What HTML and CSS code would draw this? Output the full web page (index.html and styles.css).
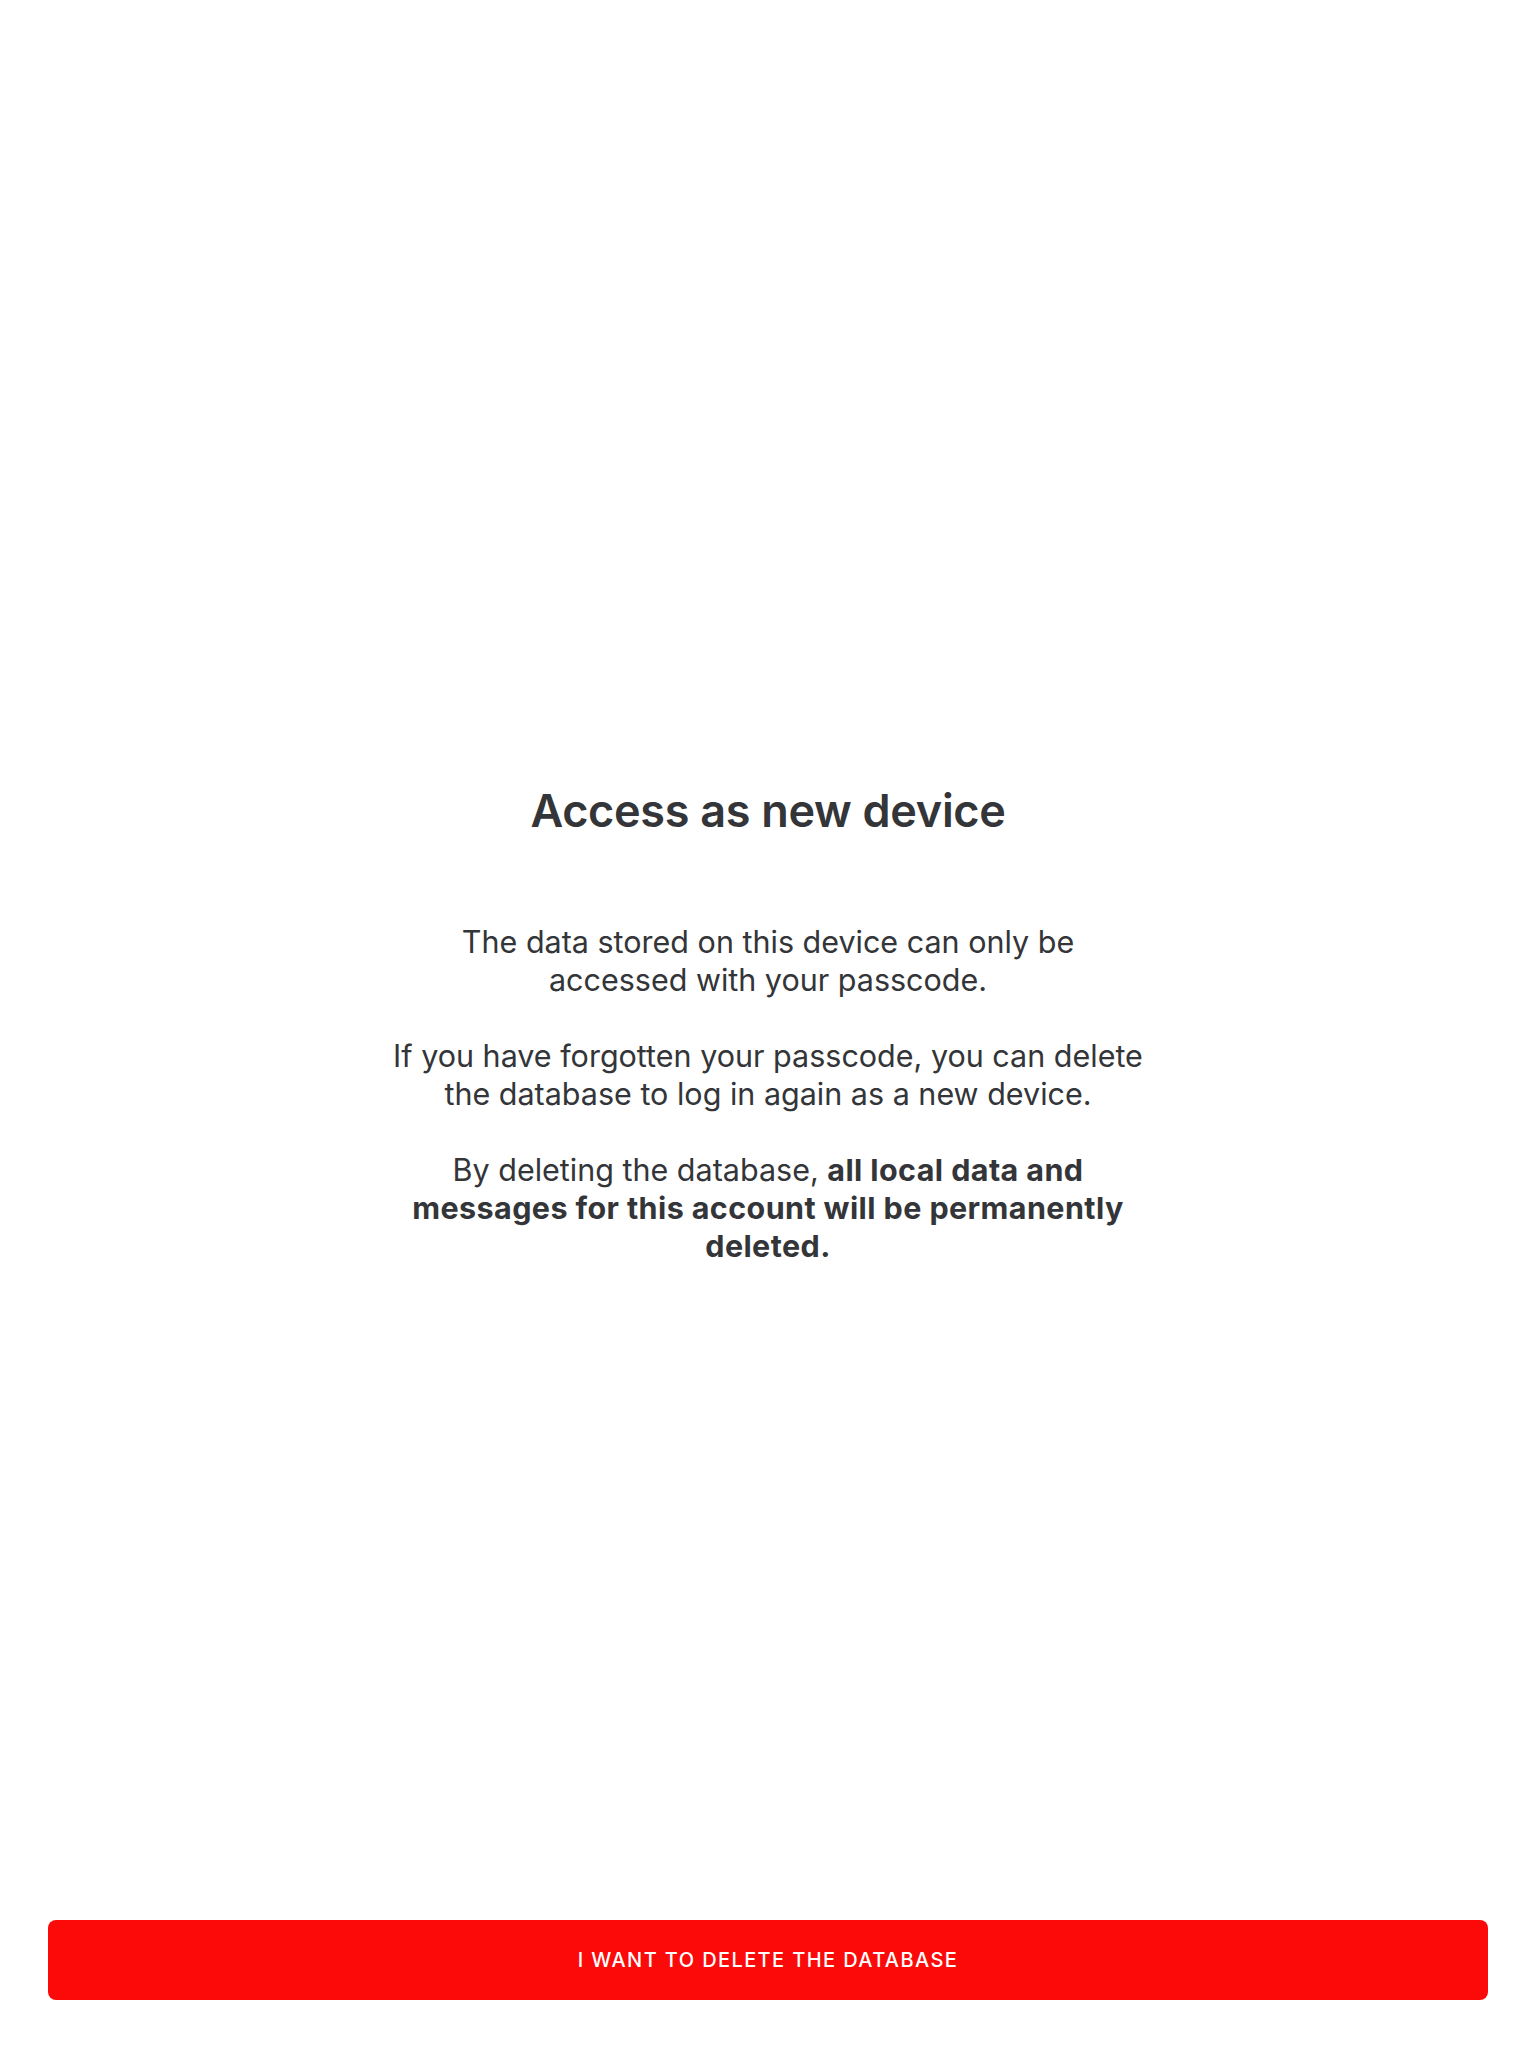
FILE: index.html
```html
<!DOCTYPE html>
<html lang="en">
<head>
<meta charset="utf-8">
<title>Access as new device</title>
<link rel="stylesheet" href="styles.css">
</head>
<body>
<div class="screen">
  <main class="content">
    <h1 class="title">Access as new device</h1>
    <div class="body">
      <p>The data stored on this device can only be<br>accessed with your passcode.</p>
      <p>If you have forgotten your passcode, you can delete<br>the database to log in again as a new device.</p>
      <p>By deleting the database, <strong>all local data and<br>messages for this account will be permanently<br>deleted.</strong></p>
    </div>
  </main>
  <footer class="actions">
    <button class="danger-btn" type="button">I WANT TO DELETE THE DATABASE</button>
  </footer>
</div>
</body>
</html>
```
FILE: styles.css
```css
html, body {
  margin: 0;
  padding: 0;
  background: #ffffff;
}
body {
  font-family: Inter, "Noto Sans", "Liberation Sans", sans-serif;
  color: #333538;
}
.screen {
  height: 2048px;
  display: flex;
  flex-direction: column;
}
.content {
  flex: 1;
  display: flex;
  flex-direction: column;
  align-items: center;
  padding-top: 783px;
  text-align: center;
}
.title {
  margin: 0;
  font-size: 45px;
  line-height: 56px;
  font-weight: 600;
  letter-spacing: -0.3px;
}
.body {
  margin-top: 84px;
  font-size: 30.5px;
  line-height: 38px;
  font-weight: 400;
}
.body p {
  margin: 0 0 38px;
}
.body strong {
  font-weight: 700;
  letter-spacing: 0.4px;
}
.actions {
  padding: 0 48px 48px;
}
.danger-btn {
  display: block;
  width: 100%;
  height: 80px;
  border: none;
  border-radius: 8px;
  background: #fc0909;
  color: #ffffff;
  font-family: Inter, "Noto Sans", "Liberation Sans", sans-serif;
  font-size: 20px;
  font-weight: 500;
  letter-spacing: 1.4px;
}
```
